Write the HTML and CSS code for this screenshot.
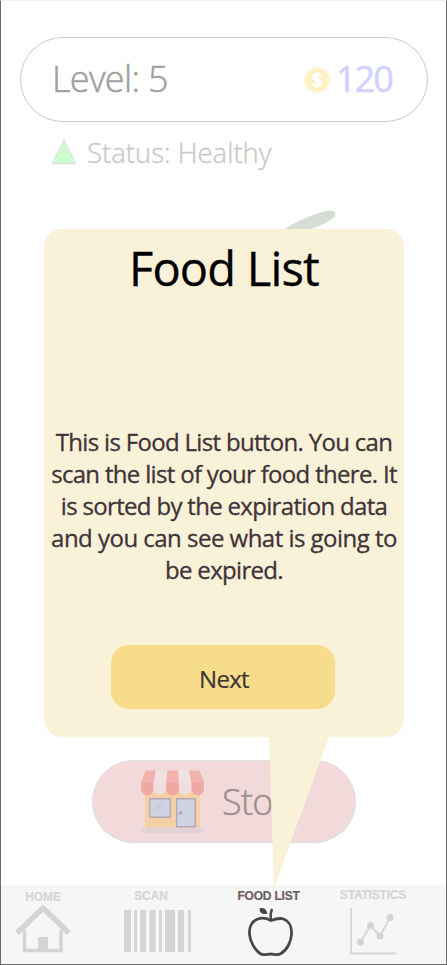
FILE: index.html
```html
<!DOCTYPE html>
<html lang="en">
<head>
<meta charset="utf-8">
<title>Food List</title>
<link rel="stylesheet" href="styles.css">
</head>
<body>
<div class="screen">
  <header class="summary">
    <span class="level">Level: 5</span>
    <span class="coins">
      <svg class="coin" viewBox="0 0 28 28"><circle cx="14" cy="14" r="13" fill="#fff3cd"/><circle cx="14" cy="14" r="10.5" fill="#fff0c2"/><path d="M18 10.2C17 8.8 15.700 8.500 14 8.500c-2.300 0-3.800 1-3.800 2.700 0 4 7.800 1.600 7.800 5.400 0 1.800-1.600 2.900-4 2.900-2 0-3.500-.6-4.300-2M14 6v16" fill="none" stroke="#fff" stroke-width="2.700"/></svg>
      <span class="amount">120</span>
    </span>
  </header>
  <div class="status">
    <svg class="arrow" viewBox="0 0 26 26"><path d="M13 1.500 24.500 24.500H1.500Z" fill="#ccffcc" stroke="#e0e0e0" stroke-width="1.300"/></svg>
    <span class="status-text">Status: Healthy</span>
  </div>
  <main class="stage">
    <svg class="leaf" viewBox="0 0 70 40"><path d="M-2 22C14 11 34 3 46 .5 54-.5 56 5 50 9 40 16 26 20 8 28Z" fill="#d6ddd5"/></svg>
    <button class="store">
      <svg class="shop" viewBox="0 0 64 64">
        <path d="M4 20h55v38H4z" fill="#f6d0a5"/>
        <path d="M0 57.500h63V63H0z" fill="#e2d2d7"/>
        <path d="M8.700 28.700h20.600v18.600H8.700zM35.700 28.700h18.600v28H35.700z" fill="#cfd3e1" stroke="#b5a8b3" stroke-width="1.500"/>
        <path d="m12.500 40 6-6m-3 7 5.500-6" stroke="#b6cfdd" stroke-width="1.500"/>
        <circle cx="39.500" cy="43" r="1.700" fill="#b39fa8"/>
        <path d="M4.500.5h10.500L12.500 14v5a6.250 6.250 0 0 1-12.500 0V12Z" fill="#f0a8a4"/>
        <path d="M15 .5h11L25 14v5a6.250 6.250 0 0 1-12.500 0v-5Z" fill="#f0dddd"/>
        <path d="M26.500.5h11L38 14v5a6.500 6.500 0 0 1-13 0v-5Z" fill="#f0a8a4"/>
        <path d="M37.500.5H48L50.500 14v5a6.250 6.250 0 0 1-12.500 0v-5Z" fill="#f0dddd"/>
        <path d="M48 .5h10.500L63 12v7a6.250 6.250 0 0 1-12.500 0v-5Z" fill="#f0a8a4"/>
        <path d="M4 .5h54.500L63 13H0Z" fill="#fff" opacity=".13"/>
      </svg>
      <span class="store-text">Sto</span>
    </button>
  </main>
  <nav class="tabs">
    <a class="tab home"><span class="label">HOME</span>
      <svg width="56" height="50" viewBox="0 0 56 50"><path d="M9.500 26v20.500h36.500V26" fill="none" stroke="#d4d4d4" stroke-width="3.500"/><path d="M2 29 28 4l26 25" fill="none" stroke="#d4d4d4" stroke-width="5.500"/><path d="M23 33h10v14H23z" fill="#d4d4d4"/></svg></a>
    <a class="tab scan"><span class="label">SCAN</span>
      <svg width="67" height="42" viewBox="0 0 67 42"><path d="M0 0h7v42H0zM10 0h3v42h-3zM16 0h6v42h-6zM25.500 0h6v42h-6zM35 0h3v42h-3zM41 0h10v42H41zM54 0h6v42h-6zM64 0h3v42h-3z" fill="#d4d4d4"/></svg></a>
    <a class="tab food active"><span class="label">FOOD LIST</span>
      <svg width="46" height="50" viewBox="0 0 46 50"><path d="M23 13.500c-4-2-9-3-13-1.500C4 14 1 20 1.500 27 2 35 7 43 12 46.500c3.500 2.500 7 .5 10.500.5s7 2 10.500-.5C39 43 43 35 43.500 27.500 44 20 41 14 35.500 12 31.500 10.700 27 12 23 13.500Z" fill="none" stroke="#484848" stroke-width="2.800"/><path d="M22.800 13C22.300 9 22.700 5 24 2" fill="none" stroke="#484848" stroke-width="2.400"/><path d="M11.500 1.500c4-1.500 7 .5 8 5-4 1.500-8 0-8-5Z" fill="#484848"/></svg></a>
    <a class="tab stats"><span class="label">STATISTICS</span>
      <svg width="47" height="47" viewBox="0 0 47 47"><path d="M1 0v45.500h45.500" fill="none" stroke="#d8d8d8" stroke-width="2"/><path d="m10.500 34 10-16.500L30 28 40 9.500" fill="none" stroke="#d8d8d8" stroke-width="2"/><g fill="#d4d4d4"><circle cx="10.500" cy="34" r="3.500"/><circle cx="20.500" cy="17.500" r="3.500"/><circle cx="30" cy="28" r="3.500"/><circle cx="40" cy="9.500" r="3.500"/></g></svg></a>
  </nav>
  <section class="tip">
    <h1 class="tip-title">Food List</h1>
    <p class="tip-body">This is Food List button. You can<br>scan the list of your food there. It<br>is sorted by the expiration data<br><span class="loose">and you can see what is going to</span><br>be expired.</p>
    <button class="next">Next</button>
    <svg class="tail" viewBox="0 0 60 151"><path d="M0 0h60L5 151Z" fill="#faf1d9"/></svg>
  </section>
</div>
</body>
</html>
```
FILE: styles.css
```css
* { box-sizing: border-box; }
body { margin: 0; font-family: "Open Sans", "Noto Sans", sans-serif; }
button { font-family: inherit; padding: 0; }
.screen {
  position: relative; display: flex; flex-direction: column;
  width: 447px; height: 965px; overflow: hidden; background: #fff;
  border: 1px solid #6c6a6c; border-top-color: #f0f0f0;
}
.summary {
  display: flex; align-items: center; justify-content: space-between;
  height: 85px; margin: 36px 18px 0 19px; padding: 0 35px 2px 31px;
  border: 1px solid #c8c8c8; border-radius: 43px;
}
.level { font-size: 36px; letter-spacing: -.65px; color: #a0a0a0; font-weight: 300; -webkit-text-stroke: .5px #a0a0a0; }
.coins { display: flex; align-items: center; gap: 5px; }
.coin { width: 28px; height: 28px; margin-top: 2px; }
.amount { font-size: 36px; letter-spacing: -1.8px; color: #d2d2ff; -webkit-text-stroke: .5px #d2d2ff; }
.status { display: flex; align-items: center; gap: 10px; height: 38px; margin: 11px 0 0 50px; }
.arrow { width: 26px; height: 26px; }
.status-text { font-size: 27.5px; font-weight: 300; letter-spacing: 0; color: #c8c8c8; -webkit-text-stroke: .3px #c8c8c8; }
.stage { flex: 1; display: flex; flex-direction: column; align-items: flex-start; justify-content: space-between; padding: 39px 0 42px 91px; }
.leaf { width: 70px; height: 40px; margin-left: 190px; overflow: visible; }
.store {
  display: flex; align-items: center; gap: 17px; width: 264px; height: 83px; padding-left: 48px;
  background: #f2dadb; border: 1px solid #dcdcdc; border-radius: 42px;
}
.shop { width: 64px; height: 64px; }
.store-text { font-size: 36px; font-weight: 300; letter-spacing: -.7px; color: #a09091; -webkit-text-stroke: .5px #a09091; }
.tabs { display: flex; height: 79px; background: #f7f6f7; }
.tab { display: flex; flex-direction: column; align-items: center; }
.label { font: bold 12px/14px "Liberation Sans", sans-serif; color: #d8d4d4; white-space: nowrap; letter-spacing: -.1px; -webkit-text-stroke: .2px; }
.home { width: 84px; padding-top: 5px; }
.home svg { margin-left: -1px; }
.scan { width: 132px; padding-top: 4px; }
.scan svg { margin-top: 7px; margin-left: 12px; }
.food { width: 103px; padding-top: 4px; }
.food svg { margin-top: 4px; margin-left: 4px; }
.stats { width: 106px; padding-top: 3px; }
.stats svg { margin-top: 6px; }
.active .label { color: #6e6060; letter-spacing: -.2px; }
.stats .label { letter-spacing: -.2px; }
.tip {
  position: absolute; left: 43px; top: 228px; width: 360px; height: 508px;
  display: flex; flex-direction: column; align-items: center;
  background: #faf1d9; border-radius: 18px;
}
.tip-title { margin: 6px 0 0; font-size: 47px; line-height: 66px; font-weight: 400; color: #000; letter-spacing: -.8px; white-space: nowrap; -webkit-text-stroke: .3px #000; }
.tip-body { margin: 125px 0 0; font-size: 24px; line-height: 32px; color: #403337; text-align: center; white-space: nowrap; letter-spacing: -.68px; -webkit-text-stroke: .3px #403337; }
.loose { letter-spacing: -.52px; }
.next {
  width: 224px; height: 64px; margin: 59px 2px 0 0; border: 0; border-radius: 18px; padding: 2px 0 0 2px;
  background: #f7dd8b; color: #403337; font-size: 24px; letter-spacing: -.7px; -webkit-text-stroke: .2px #403337;
}
.tail { position: absolute; left: 225px; top: 508px; width: 60px; height: 151px; }
```
